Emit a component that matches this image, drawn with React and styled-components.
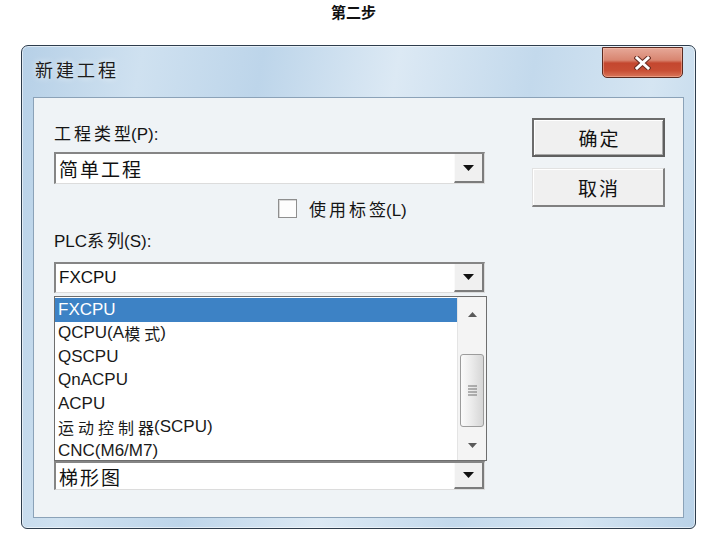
import React from "react";
import styled, { createGlobalStyle } from "styled-components";

const Global = createGlobalStyle`
  html, body { margin: 0; padding: 0; background: #ffffff; }
  body {
    width: 707px; height: 544px; overflow: hidden;
    font-family: "Liberation Sans", "Noto Sans CJK SC", sans-serif;
    color: #161616;
  }
`;

const Page = styled.div`
  width: 707px;
  height: 544px;
  display: flex;
  flex-direction: column;
`;

const Heading = styled.h1`
  margin: 0;
  height: 45px;
  font-family: "Noto Sans CJK SC", sans-serif;
  font-weight: 700;
  font-size: 15px;
  line-height: 24px;
  text-align: center;
  color: #111;
`;

const Dialog = styled.section`
  box-sizing: border-box;
  margin-left: 21px;
  width: 675px;
  height: 484px;
  border: 1px solid #2e3d4d;
  border-radius: 7px 7px 6px 6px;
  background: linear-gradient(100deg, #b6d0e7 0%, #cfe1f0 16%, #bdd5ea 32%, #dce9f4 50%, #c3d9ec 68%, #d5e5f2 84%, #b9d2e8 100%);
  box-shadow: inset 0 0 0 1px rgba(255, 255, 255, 0.55);
  padding: 0 11px 10px 11px;
  display: flex;
  flex-direction: column;
`;

const TitleBar = styled.header`
  height: 51px;
  display: flex;
  justify-content: space-between;
  align-items: flex-start;
  padding-left: 2px;
  padding-right: 1px;
`;

const Title = styled.div`
  margin-top: 12px;
  font-family: "Noto Sans CJK SC", sans-serif;
  font-size: 18px;
  line-height: 22px;
  letter-spacing: 3px;
  color: #1c1c1c;
  text-shadow: 0 0 6px rgba(255, 255, 255, 0.9);
`;

const CloseButton = styled.button`
  box-sizing: border-box;
  width: 81px;
  height: 31px;
  margin-top: 1px;
  padding: 0;
  border: 1px solid #5a2a20;
  border-radius: 0 0 5px 5px;
  background: linear-gradient(#e6a898 0%, #d88570 42%, #c4472f 52%, #c84e34 78%, #d9765a 100%);
  box-shadow: inset 0 0 0 1px rgba(255, 200, 180, 0.45);
  display: flex;
  align-items: center;
  justify-content: center;
`;

const Client = styled.div`
  flex: 1;
  border: 1px solid #8ba2b8;
  background: #eff3f6;
  padding: 20px 0 0 20px;
  display: grid;
  grid-template-columns: 433px 133px;
  column-gap: 45px;
  align-items: start;
`;

const LeftCol = styled.div`
  display: flex;
  flex-direction: column;
`;

const RightCol = styled.div`
  display: flex;
  flex-direction: column;
  gap: 11px;
`;

const Han = styled.span`
  font-family: "Noto Sans CJK SC", sans-serif;
  font-size: ${(p) => (p.$fs ? `${p.$fs}px` : "inherit")};
  letter-spacing: ${(p) => p.$ls}px;
`;

const Label = styled.div`
  height: 24px;
  line-height: 24px;
  font-size: 17px;
  margin-top: ${(p) => p.$mt}px;
  color: #141414;
  white-space: nowrap;
`;

const ComboWrap = styled.div`
  position: relative;
  margin-top: ${(p) => p.$mt}px;
`;

const Combo = styled.div`
  box-sizing: border-box;
  width: 431px;
  height: ${(p) => p.$h}px;
  margin-top: ${(p) => p.$mt || 0}px;
  display: flex;
  background: #ffffff;
  border-top: 2px solid #858585;
  border-left: 2px solid #858585;
  border-right: 1px solid #dcdcdc;
  border-bottom: 1px solid #dcdcdc;
`;

const ComboText = styled.div`
  flex: 1;
  display: flex;
  align-items: center;
  padding-left: 3px;
  font-size: ${(p) => p.$fs}px;
  color: #111;
  white-space: nowrap;
`;

const DropButton = styled.div`
  box-sizing: border-box;
  width: 30px;
  background: #f0f0f0;
  border-left: 1px solid #fafafa;
  border-right: 2px solid #7c7c7c;
  border-bottom: 2px solid #7c7c7c;
  display: flex;
  align-items: center;
  justify-content: center;
`;

const CheckRow = styled.label`
  margin-top: 12px;
  margin-left: 224px;
  height: 24px;
  display: flex;
  align-items: center;
  gap: 12px;
  font-size: 17px;
  color: #141414;
`;

const CheckBox = styled.span`
  box-sizing: border-box;
  width: 19px;
  height: 19px;
  background: #fdfdfd;
  border: 1px solid #8e8e8e;
  box-shadow: inset 1px 1px 0 #d8d8d8;
`;

const DropList = styled.div`
  position: absolute;
  top: calc(100% + 3px);
  left: 0;
  box-sizing: border-box;
  width: 433px;
  height: 165px;
  border: 1px solid #6e6e6e;
  background: #ffffff;
  display: flex;
  z-index: 2;
`;

const Items = styled.ul`
  flex: 1;
  margin: 0;
  padding: 1px 0 0 0;
  list-style: none;
  overflow: hidden;
`;

const Item = styled.li`
  height: 23.5px;
  display: flex;
  align-items: center;
  overflow: hidden;
  padding-left: 3px;
  font-size: 17px;
  white-space: nowrap;
  color: ${(p) => (p.$active ? "#ffffff" : "#1a1a1a")};
  background: ${(p) => (p.$active ? "#3d82c5" : "transparent")};
`;

const ScrollBar = styled.div`
  width: 28px;
  background: #f4f4f4;
  border-left: 1px solid #e4e4e4;
  display: flex;
  flex-direction: column;
  align-items: center;
`;

const ScrollArrow = styled.div`
  height: ${(p) => p.$h}px;
  width: 100%;
  display: flex;
  align-items: center;
  justify-content: center;
`;

const Track = styled.div`
  flex: 1;
  width: 100%;
  display: flex;
  justify-content: center;
`;

const Thumb = styled.div`
  box-sizing: border-box;
  margin-top: 23px;
  width: 24px;
  height: 73px;
  border: 1px solid #9c9c9c;
  border-radius: 3px;
  background: linear-gradient(to right, #fbfbfb 0%, #ececec 45%, #d6d6d6 100%);
  display: flex;
  align-items: center;
  justify-content: center;
`;

const DlgButton = styled.button`
  box-sizing: border-box;
  width: 133px;
  height: 39px;
  padding: 0;
  background: #f0f0f0;
  font-size: 19px;
  color: #111;
  display: flex;
  align-items: center;
  justify-content: center;
  border: ${(p) => (p.$default ? "2px solid #6c6c6c" : "1px solid #e2e2e2")};
  border-right: 2px solid ${(p) => (p.$default ? "#5f5f5f" : "#808080")};
  border-bottom: 2px solid ${(p) => (p.$default ? "#5f5f5f" : "#808080")};
  box-shadow: ${(p) => (p.$default ? "inset 1px 1px 0 #ffffff, inset -1px -1px 0 #a8a8a8" : "inset 1px 1px 0 #ffffff")};
`;

const CJK = /([\u2E80-\u9FFF\uF900-\uFAFF\uFF00-\uFFEF]+)/;

// Splits a string into CJK and Latin runs; CJK runs are widened with
// letter-spacing between glyphs (not after the last one).
function Txt({ children, ls = 3, fs }) {
  const out = [];
  String(children)
    .split(CJK)
    .filter((s) => s !== "")
    .forEach((part, i) => {
      if (CJK.test(part)) {
        const head = part.slice(0, -1);
        const tail = part.slice(-1);
        if (head)
          out.push(
            <Han key={`${i}h`} $ls={ls} $fs={fs}>
              {head}
            </Han>
          );
        out.push(
          <Han key={`${i}t`} $ls={0} $fs={fs}>
            {tail}
          </Han>
        );
      } else {
        out.push(<React.Fragment key={i}>{part}</React.Fragment>);
      }
    });
  return out;
}

const DownArrow = () => (
  <svg width="11" height="6" viewBox="0 0 11 6">
    <path d="M0 0 H11 L5.5 6 Z" fill="#111" />
  </svg>
);

const SmallArrow = ({ up }) => (
  <svg width="9" height="5" viewBox="0 0 9 5">
    <path d={up ? "M0 5 H9 L4.5 0 Z" : "M0 0 H9 L4.5 5 Z"} fill="#5a5a5a" />
  </svg>
);

const Grip = () => (
  <svg width="9" height="11" viewBox="0 0 9 11">
    <path d="M0 1 H9 M0 4 H9 M0 7 H9 M0 10 H9" stroke="#707070" strokeWidth="1.2" />
  </svg>
);

const CloseX = () => (
  <svg width="17" height="14" viewBox="0 0 17 14">
    <path d="M3 2 L14 12 M14 2 L3 12" stroke="#6a2d22" strokeWidth="5" strokeLinecap="square" />
    <path d="M3 2 L14 12 M14 2 L3 12" stroke="#ffffff" strokeWidth="3" strokeLinecap="square" />
  </svg>
);

const Combobox = ({ text, h, fs, mt }) => (
  <Combo $h={h} $mt={mt}>
    <ComboText $fs={fs}>
      <Txt ls={2}>{text}</Txt>
    </ComboText>
    <DropButton>
      <DownArrow />
    </DropButton>
  </Combo>
);

const plcItems = [
  "FXCPU",
  "QCPU(A模式)",
  "QSCPU",
  "QnACPU",
  "ACPU",
  "运动控制器(SCPU)",
  "CNC(M6/M7)",
];

export default function App() {
  return (
    <Page>
      <Global />
      <Heading>第二步</Heading>
      <Dialog>
        <TitleBar>
          <Title>新建工程</Title>
          <CloseButton aria-label="关闭">
            <CloseX />
          </CloseButton>
        </TitleBar>
        <Client>
          <LeftCol>
            <Label $mt={3}>
              <Txt ls={3}>工程类型(P):</Txt>
            </Label>
            <Combobox text="简单工程" h={32} fs={19} mt={7} />
            <CheckRow>
              <CheckBox />
              <span>
                <Txt ls={3}>使用标签(L)</Txt>
              </span>
            </CheckRow>
            <Label $mt={8}>
              <Txt ls={3}>PLC系列(S):</Txt>
            </Label>
            <ComboWrap $mt={10}>
              <Combobox text="FXCPU" h={31} fs={17} />
              <DropList>
                <Items>
                  {plcItems.map((it, i) => (
                    <Item key={it} $active={i === 0}>
                      <Txt ls={4} fs={16}>
                        {it}
                      </Txt>
                    </Item>
                  ))}
                </Items>
                <ScrollBar>
                  <ScrollArrow $h={34}>
                    <SmallArrow up />
                  </ScrollArrow>
                  <Track>
                    <Thumb>
                      <Grip />
                    </Thumb>
                  </Track>
                  <ScrollArrow $h={30}>
                    <SmallArrow />
                  </ScrollArrow>
                </ScrollBar>
              </DropList>
            </ComboWrap>
            <Combobox text="梯形图" h={29} fs={19} mt={168} />
          </LeftCol>
          <RightCol>
            <DlgButton $default>
              <Txt ls={2}>确定</Txt>
            </DlgButton>
            <DlgButton>
              <Txt ls={2}>取消</Txt>
            </DlgButton>
          </RightCol>
        </Client>
      </Dialog>
    </Page>
  );
}
